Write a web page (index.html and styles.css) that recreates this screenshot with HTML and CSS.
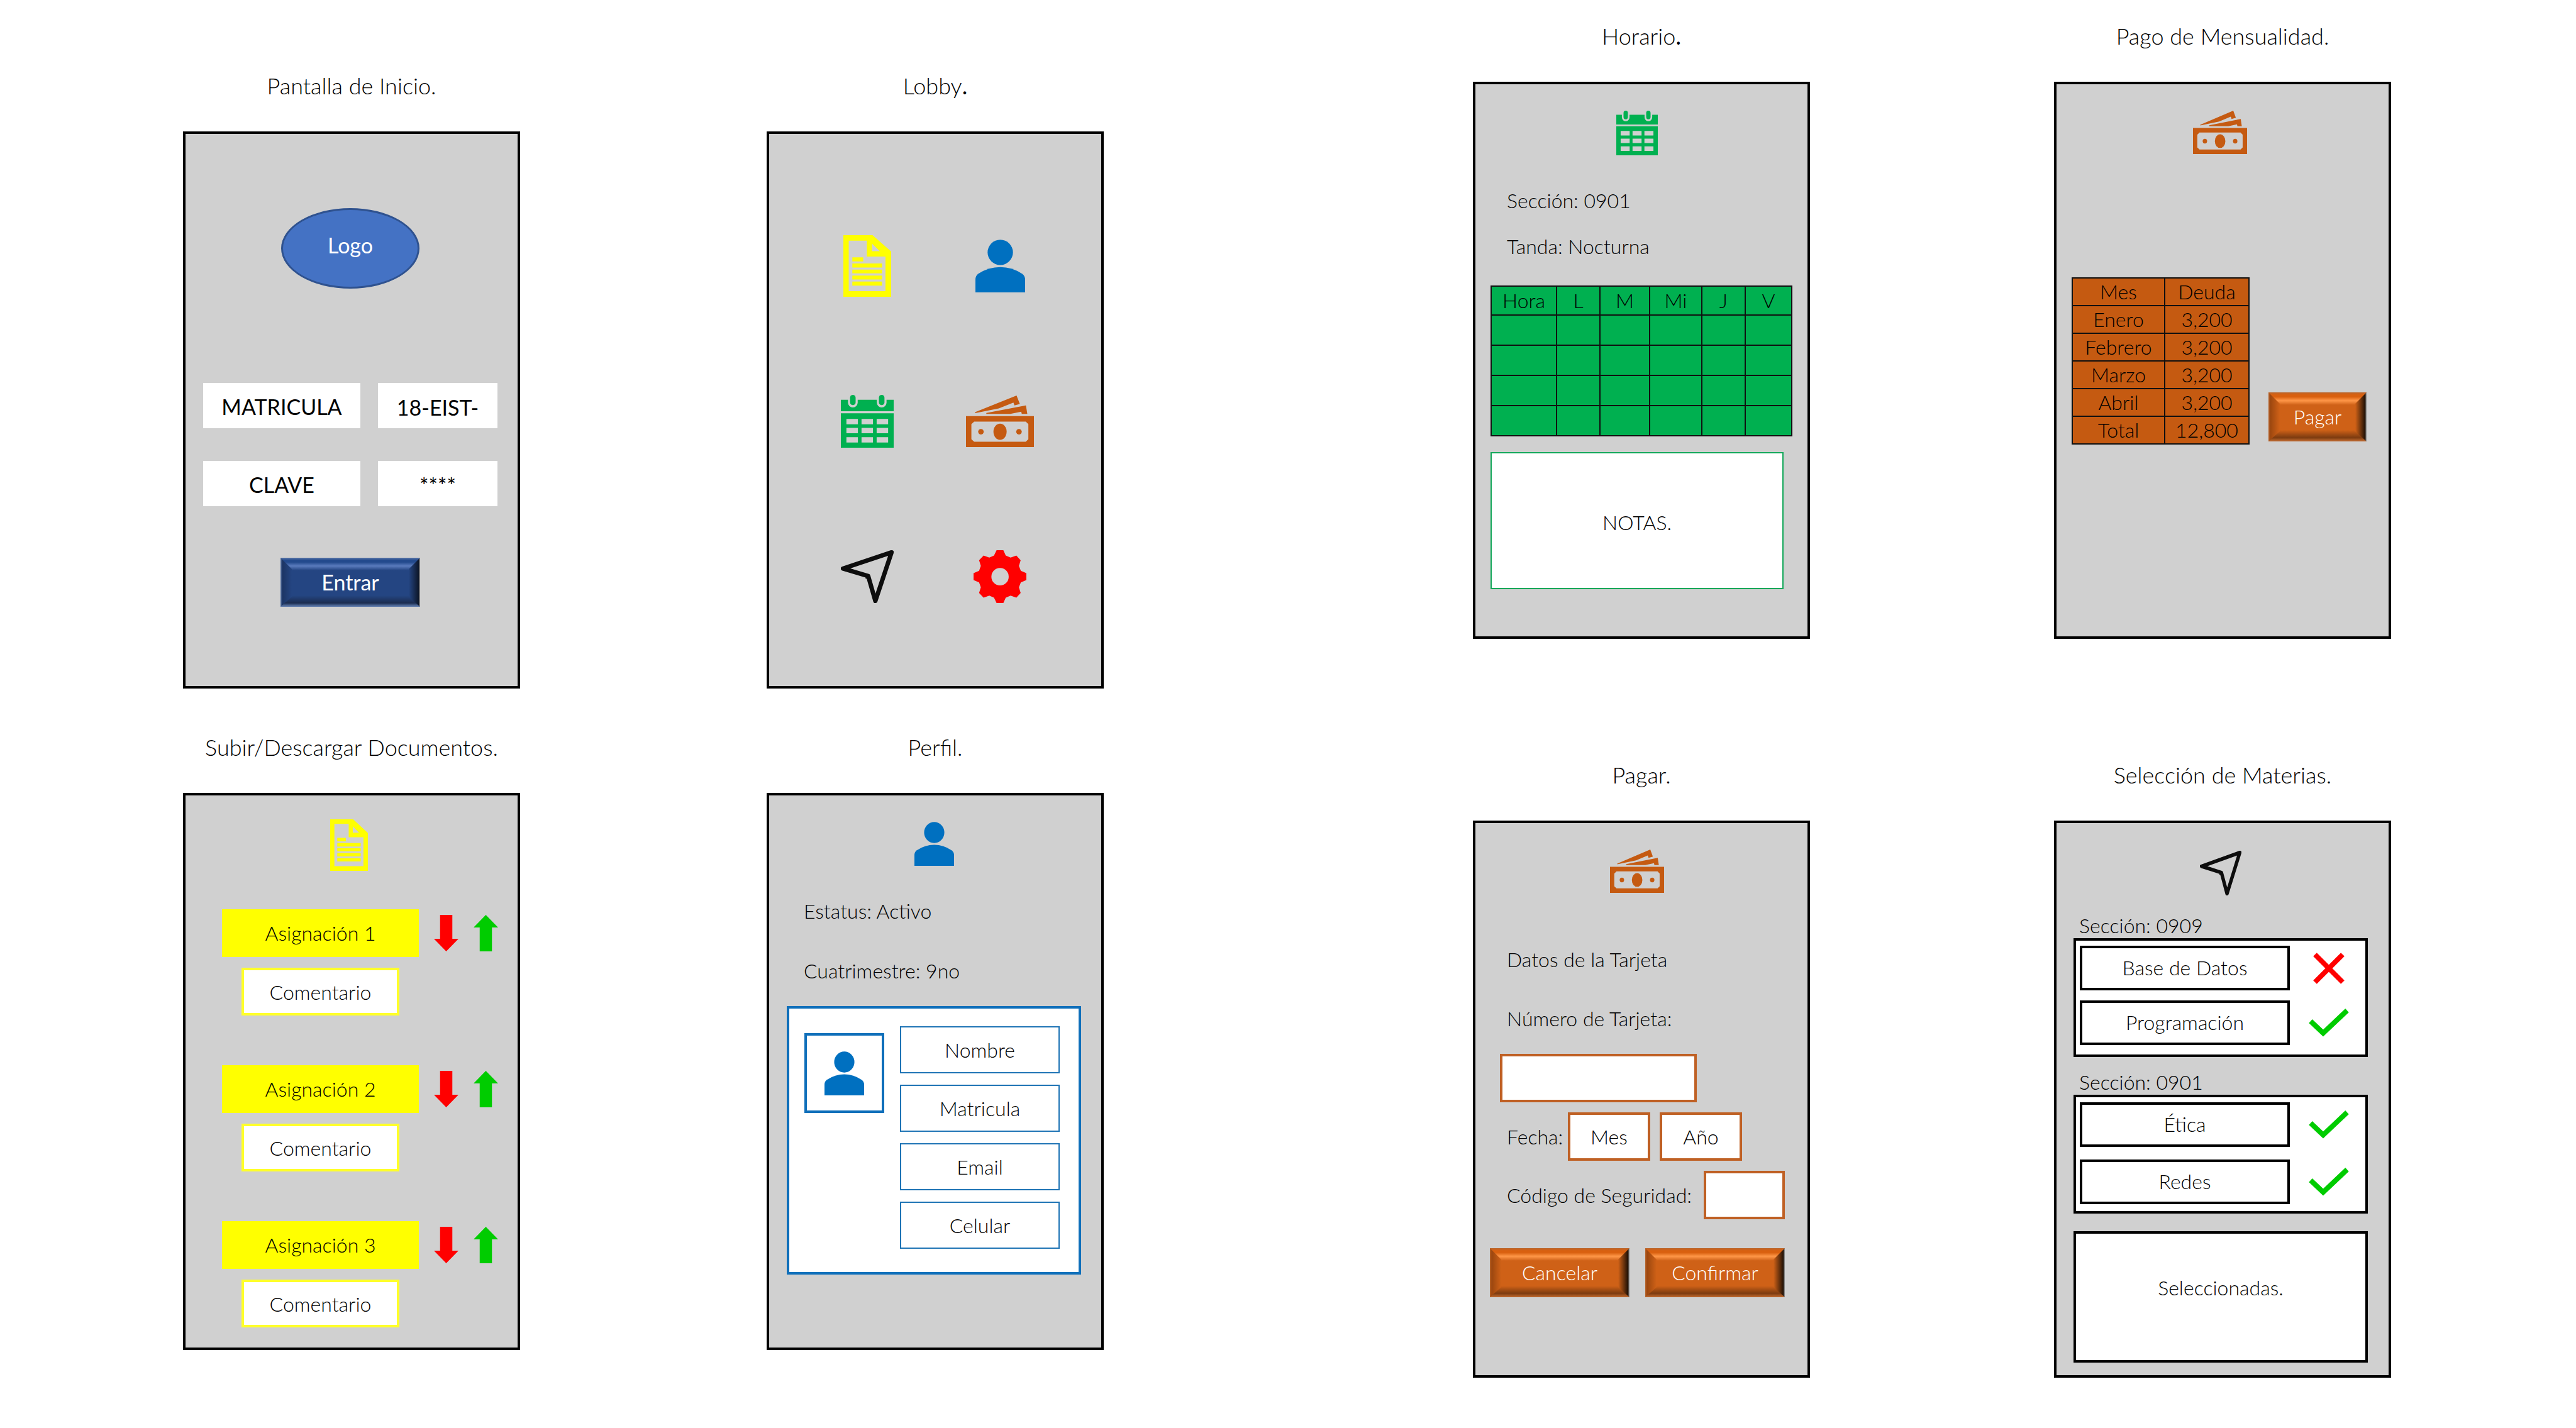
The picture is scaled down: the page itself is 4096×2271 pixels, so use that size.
FILE: index.html
```html
<!DOCTYPE html>
<html lang="es">
<head>
<meta charset="utf-8">
<title>Pantallas de la aplicación</title>
<link rel="stylesheet" href="styles.css">
</head>
<body>
<svg class="sprite" aria-hidden="true">
  <symbol id="doc" viewBox="71 67 277 357" preserveAspectRatio="none">
    <path fill="#ffff00" fill-rule="evenodd" d="M71 67H240L348 162V424H71ZM102 99V391H315V191H207V99ZM237 116V160H283Z"/>
    <path fill="#ffff00" d="M123 195H186V219H123ZM123 231H295V255H123ZM123 266H295V288H123ZM123 301H295V324H123ZM123 336H295V359H123Z"/>
  </symbol>
  <symbol id="person" viewBox="836 93 286 305" preserveAspectRatio="none">
    <circle fill="#0070c0" cx="979" cy="167" r="73"/>
    <path fill="#0070c0" d="M836 398V324Q836 302 853 290Q912 252 979 252Q1046 252 1104 290Q1122 302 1122 324V398Z"/>
  </symbol>
  <symbol id="calendar" viewBox="61 59 304 304" preserveAspectRatio="none">
    <path fill="#00b050" d="M61 87H102V103A28 28 0 0 0 158 103V87H268V103A28 28 0 0 0 324 103V87H365V153H61Z"/>
    <rect fill="#00b050" x="114" y="59" width="32" height="59" rx="16"/>
    <rect fill="#00b050" x="280" y="59" width="32" height="59" rx="16"/>
    <path fill="#00b050" fill-rule="evenodd" d="M61 165H365V363H61ZM93 197V228H159V197ZM180 197V228H246V197ZM267 197V228H333V197ZM93 249V280H159V249ZM180 249V280H246V249ZM267 249V280H333V249ZM93 302V333H159V302ZM180 302V333H246V302ZM267 302V333H333V302Z"/>
  </symbol>
  <symbol id="money" viewBox="785 58 391 299" preserveAspectRatio="none">
    <path fill="#c55a11" fill-rule="evenodd" d="M785 177H1176V357H785ZM832 209L816 224V311L832 326H1129L1144 311V224L1129 209Z"/>
    <ellipse fill="#c55a11" cx="981" cy="268" rx="38" ry="47"/>
    <circle fill="#c55a11" cx="871" cy="268" r="16"/>
    <circle fill="#c55a11" cx="1090" cy="268" r="16"/>
    <path fill="#c55a11" d="M837 155L1076 58L1095 107L1064 115L1058 99L974 133L838 160ZM902 159L1130 115L1138 165H1106L1103 152L1040 165H902Z"/>
  </symbol>
  <symbol id="plane" viewBox="63 65 303 302" preserveAspectRatio="none">
    <path fill="none" stroke="#0d0d0d" stroke-width="25" stroke-linejoin="round" d="M354 77L75 170L220 213L261 355Z"/>
    <path fill="#0d0d0d" d="M205 205H228V228H205Z"/>
  </symbol>
  <symbol id="gear" viewBox="826 63 305 303" preserveAspectRatio="none">
    <path fill="#ff0000" fill-rule="evenodd" d="M959 63H998L1012 94L1040 105L1073 94L1098 121L1088 153L1099 181L1131 195V234L1099 248L1088 276L1098 308L1073 335L1040 324L1012 335L998 366H959L944 335L917 324L884 335L858 308L868 276L858 248L826 234V195L858 181L868 153L858 121L884 94L917 105L944 94ZM979 165A50 50 0 1 0 979 265A50 50 0 1 0 979 165Z"/>
  </symbol>
  <symbol id="down" viewBox="0 0 40 58" preserveAspectRatio="none"><path fill="#ff0000" d="M10 0H30V38H40L20 58L0 38H10Z"/></symbol>
  <symbol id="up" viewBox="0 0 40 58" preserveAspectRatio="none"><path fill="#00cc00" d="M10 58H30V20H40L20 0L0 20H10Z"/></symbol>
  <symbol id="cross" viewBox="0 0 50 50"><path fill="none" stroke="#ff0000" stroke-width="8" d="M3 3L47 47M47 3L3 47"/></symbol>
  <symbol id="check" viewBox="0 0 64 46"><path fill="none" stroke="#00cc00" stroke-width="8" d="M3 20L23 39L61 3"/></symbol>
</svg>

<main class="board">
  <div class="half half--left">
    <section class="screen">
      <h2 class="screen__title">Pantalla de Inicio.</h2>
      <form class="panel login">
        <div class="logo">Logo</div>
        <div class="login__fields">
          <label class="login__cell" for="matricula">MATRICULA</label>
          <input class="login__cell" id="matricula" type="text" value="18-EIST-">
          <label class="login__cell" for="clave">CLAVE</label>
          <input class="login__cell" id="clave" type="text" value="****">
        </div>
        <button class="bevel bevel--blue login__enter" type="button">Entrar</button>
      </form>
    </section>

    <section class="screen">
      <h2 class="screen__title">Lobby<b>.</b></h2>
      <nav class="panel lobby">
        <a href="#documentos" aria-label="Documentos"><svg class="lobby__doc"><use href="#doc"/></svg></a>
        <a href="#perfil" aria-label="Perfil"><svg class="lobby__person"><use href="#person"/></svg></a>
        <a href="#horario" aria-label="Horario"><svg class="lobby__icon"><use href="#calendar"/></svg></a>
        <a href="#pago" aria-label="Pago"><svg class="lobby__money"><use href="#money"/></svg></a>
        <a href="#materias" aria-label="Materias"><svg class="lobby__icon"><use href="#plane"/></svg></a>
        <a href="#ajustes" aria-label="Ajustes"><svg class="lobby__icon"><use href="#gear"/></svg></a>
      </nav>
    </section>

    <section class="screen" id="documentos">
      <h2 class="screen__title">Subir/Descargar Documentos.</h2>
      <div class="panel docs">
        <div class="panel__icon"><svg class="icon icon--doc"><use href="#doc"/></svg></div>
        <div class="docs__list">
          <div class="task">
            <div class="task__name">Asignación 1</div>
            <button class="task__arrow" type="button" aria-label="Descargar"><svg><use href="#down"/></svg></button>
            <button class="task__arrow" type="button" aria-label="Subir"><svg><use href="#up"/></svg></button>
            <input class="task__comment" type="text" placeholder="Comentario" aria-label="Comentario 1">
          </div>
          <div class="task">
            <div class="task__name">Asignación 2</div>
            <button class="task__arrow" type="button" aria-label="Descargar"><svg><use href="#down"/></svg></button>
            <button class="task__arrow" type="button" aria-label="Subir"><svg><use href="#up"/></svg></button>
            <input class="task__comment" type="text" placeholder="Comentario" aria-label="Comentario 2">
          </div>
          <div class="task">
            <div class="task__name">Asignación 3</div>
            <button class="task__arrow" type="button" aria-label="Descargar"><svg><use href="#down"/></svg></button>
            <button class="task__arrow" type="button" aria-label="Subir"><svg><use href="#up"/></svg></button>
            <input class="task__comment" type="text" placeholder="Comentario" aria-label="Comentario 3">
          </div>
        </div>
      </div>
    </section>

    <section class="screen" id="perfil">
      <h2 class="screen__title">Perfil.</h2>
      <div class="panel profile">
        <div class="panel__icon"><svg class="icon icon--person"><use href="#person"/></svg></div>
        <p class="line profile__status">Estatus: Activo</p>
        <p class="line profile__term">Cuatrimestre: 9no</p>
        <div class="card">
          <div class="card__photo"><svg class="icon icon--person"><use href="#person"/></svg></div>
          <div class="card__fields">
            <input class="card__field" type="text" placeholder="Nombre" aria-label="Nombre">
            <input class="card__field" type="text" placeholder="Matricula" aria-label="Matricula">
            <input class="card__field" type="text" placeholder="Email" aria-label="Email">
            <input class="card__field" type="text" placeholder="Celular" aria-label="Celular">
          </div>
        </div>
      </div>
    </section>
  </div>

  <div class="half half--right">
    <section class="screen" id="horario">
      <h2 class="screen__title">Horario<b>.</b></h2>
      <div class="panel schedule">
        <div class="panel__icon"><svg class="icon icon--calendar"><use href="#calendar"/></svg></div>
        <p class="line schedule__section">Sección: 0901</p>
        <p class="line schedule__shift">Tanda: Nocturna</p>
        <table class="grid grid--green">
          <colgroup><col class="c-hour"><col class="c-l"><col class="c-m"><col class="c-mi"><col class="c-l"><col class="c-v"></colgroup>
          <thead><tr><th>Hora</th><th>L</th><th>M</th><th>Mi</th><th>J</th><th>V</th></tr></thead>
          <tbody>
            <tr><td></td><td></td><td></td><td></td><td></td><td></td></tr>
            <tr><td></td><td></td><td></td><td></td><td></td><td></td></tr>
            <tr><td></td><td></td><td></td><td></td><td></td><td></td></tr>
            <tr><td></td><td></td><td></td><td></td><td></td><td></td></tr>
          </tbody>
        </table>
        <textarea class="notes" placeholder="NOTAS." aria-label="Notas"></textarea>
      </div>
    </section>

    <section class="screen" id="pago">
      <h2 class="screen__title">Pago de Mensualidad.</h2>
      <div class="panel debt">
        <div class="panel__icon"><svg class="icon icon--money"><use href="#money"/></svg></div>
        <div class="debt__row">
          <table class="grid grid--orange">
            <colgroup><col class="c-month"><col class="c-debt"></colgroup>
            <thead><tr><th>Mes</th><th>Deuda</th></tr></thead>
            <tbody>
              <tr><td>Enero</td><td>3,200</td></tr>
              <tr><td>Febrero</td><td>3,200</td></tr>
              <tr><td>Marzo</td><td>3,200</td></tr>
              <tr><td>Abril</td><td>3,200</td></tr>
              <tr><td>Total</td><td>12,800</td></tr>
            </tbody>
          </table>
          <button class="bevel bevel--orange debt__pay" type="button">Pagar</button>
        </div>
      </div>
    </section>

    <section class="screen" id="pagar">
      <h2 class="screen__title">Pagar.</h2>
      <form class="panel pay">
        <div class="panel__icon"><svg class="icon icon--money"><use href="#money"/></svg></div>
        <p class="line pay__heading">Datos de la Tarjeta</p>
        <label class="line pay__number-label" for="tarjeta">Número de Tarjeta:</label>
        <input class="box pay__number" id="tarjeta" type="text">
        <div class="pay__row">
          <label class="line pay__date-label" for="mes">Fecha:</label>
          <select class="box pay__date" id="mes"><option>Mes</option></select>
          <select class="box pay__date" aria-label="Año"><option>Año</option></select>
        </div>
        <div class="pay__row pay__row--code">
          <label class="line" for="codigo">Código de Seguridad:</label>
          <input class="box pay__code" id="codigo" type="text">
        </div>
        <div class="pay__actions">
          <button class="bevel bevel--orange" type="button">Cancelar</button>
          <button class="bevel bevel--orange" type="button">Confirmar</button>
        </div>
      </form>
    </section>

    <section class="screen" id="materias">
      <h2 class="screen__title">Selección de Materias.</h2>
      <div class="panel subjects">
        <div class="panel__icon"><svg class="icon icon--plane"><use href="#plane"/></svg></div>
        <h3 class="line subjects__label">Sección: 0909</h3>
        <ul class="subjects__group">
          <li><span class="subject">Base de Datos</span><svg class="mark mark--cross"><use href="#cross"/></svg></li>
          <li><span class="subject">Programación</span><svg class="mark"><use href="#check"/></svg></li>
        </ul>
        <h3 class="line subjects__label">Sección: 0901</h3>
        <ul class="subjects__group subjects__group--loose">
          <li><span class="subject">Ética</span><svg class="mark"><use href="#check"/></svg></li>
          <li><span class="subject">Redes</span><svg class="mark"><use href="#check"/></svg></li>
        </ul>
        <div class="subjects__chosen">Seleccionadas.</div>
      </div>
    </section>
  </div>
</main>
</body>
</html>
```

FILE: styles.css
```css
* { box-sizing: border-box; }

body {
  margin: 0;
  background: #fff;
  color: #000;
  font-family: Lato, "Liberation Sans", sans-serif;
  font-size: 32px;
  font-weight: 300;
  line-height: 40px;
}

h2, h3, p, ul { margin: 0; padding: 0; font-weight: inherit; font-size: inherit; }
ul { list-style: none; }
b { font-weight: 400; }
svg { display: block; }
.sprite { display: none; }

input, select, textarea, button {
  margin: 0;
  padding: 0;
  border: 0;
  border-radius: 0;
  outline: 0;
  background: #fff;
  color: inherit;
  font: inherit;
  text-align: center;
}
::placeholder { color: #000; opacity: 1; }
select { appearance: none; text-align-last: center; }

/* Board */
.board { display: grid; grid-template-columns: 1fr 1fr; }
.half {
  display: grid;
  grid-template-columns: 1fr 1fr;
  align-content: start;
}
.half--left { padding: 116px 293px 0 291px; gap: 73px 392px; }
.half--right { padding: 37px 294px 0; gap: 196px 388px; }

.screen__title {
  margin-bottom: 53px;
  font-size: 36px;
  text-align: center;
}
.panel {
  display: flex;
  flex-direction: column;
  min-height: 886px;
  padding-top: 42px;
  border: 4px solid #000;
  background: #d0d0d0;
}
.panel__icon { display: flex; justify-content: center; padding-right: 8px; }
.icon--doc { width: 60px; height: 82px; }
.icon--person { width: 63px; height: 70px; }
.icon--calendar { width: 66px; height: 71px; }
.icon--money { width: 86px; height: 69px; }
.icon--plane { width: 66px; height: 71px; }
.line { display: block; padding-left: 50px; }

/* Bevelled buttons */
.bevel {
  position: relative;
  height: 78px;
  background: linear-gradient(var(--rim), var(--top) 4px, var(--top) 7px, var(--shine) 13px, var(--base) 20px, var(--base) 60px, var(--low) 72px, var(--rim) 77px);
  color: #fff;
}
.bevel::before, .bevel::after {
  content: "";
  position: absolute;
  top: 0;
  bottom: 0;
  width: 18px;
}
.bevel::before {
  left: 0;
  background: linear-gradient(90deg, var(--rim), var(--left) 3px, var(--base));
  clip-path: polygon(0 0, 100% 18px, 100% calc(100% - 16px), 0 100%);
}
.bevel::after {
  right: 0;
  background: linear-gradient(90deg, var(--base), var(--dark) 16px, #888 17px);
  clip-path: polygon(100% 0, 0 18px, 0 calc(100% - 16px), 100% 100%);
}
.bevel--blue { --rim: #5b77a8; --top: #234a8d; --shine: #5a7bbd; --base: #244582; --low: #1c2d50; --left: #1c3564; --dark: #0d1628; }
.bevel--orange { --rim: #b9652c; --top: #d9600f; --shine: #ff9748; --base: #cf6117; --low: #7c3b10; --left: #9c470f; --dark: #1e1006; }

/* Login */
.login { padding-top: 118px; padding-right: 4px; align-items: center; font-size: 34px; font-weight: 400; }
.logo {
  display: flex;
  align-items: center;
  justify-content: center;
  width: 220px;
  height: 128px;
  padding-bottom: 10px;
  border: 3px solid #2f528f;
  border-radius: 50%;
  background: #4472c4;
  color: #fff;
}
.login__fields {
  display: grid;
  grid-template-columns: 250fr 190fr;
  gap: 52px 28px;
  width: 100%;
  margin-top: 150px;
  padding: 0 28px;
}
.login__cell { width: 100%; height: 72px; padding-top: 4px; background: #fff; line-height: 68px; text-align: center; }
.login__enter { width: 222px; margin-top: 82px; }

/* Lobby */
.lobby {
  display: grid;
  grid-template-columns: 110px 110px;
  grid-auto-rows: 100px;
  align-content: start;
  gap: 147px 101px;
  padding: 160px 100px 0 101px;
}
.lobby a { display: flex; align-items: center; justify-content: center; }
.lobby__doc { width: 76px; height: 98px; }
.lobby__person { width: 79px; height: 84px; }
.lobby__icon { width: 84px; height: 84px; }
.lobby__money { width: 108px; height: 82px; }

/* Documents */
.docs { padding-top: 38px; }
.docs__list { display: grid; gap: 79px; margin-top: 61px; padding: 0 31px 0 58px; }
.task {
  display: grid;
  grid-template-columns: 1fr 39px 39px;
  align-items: center;
  gap: 17px 24px;
}
.task__name { height: 76px; background: #ffff00; line-height: 76px; text-align: center; }
.task__arrow { width: 39px; height: 58px; background: none; }
.task__arrow svg { width: 39px; height: 58px; }
.task__comment { justify-self: center; width: 251px; height: 76px; border: 4px solid #ffff29; }

/* Profile */
.profile .panel__icon { padding-right: 4px; }
.profile .line { padding-left: 55px; }
.profile__status { margin-top: 52px; }
.profile__term { margin-top: 55px; }
.card {
  display: flex;
  align-items: flex-start;
  gap: 25px;
  margin: 36px 32px 0 28px;
  padding: 28px 30px 37px 24px;
  border: 4px solid #0f6fba;
  background: #fff;
}
.card__photo {
  display: flex;
  align-items: center;
  justify-content: center;
  width: 127px;
  height: 127px;
  margin-top: 11px;
  border: 4px solid #0f6fba;
}
.card__fields { display: grid; flex: 1; gap: 18px; }
.card__field { width: 100%; height: 75px; border: 2px solid #1f74b5; }

/* Tables */
.grid { table-layout: fixed; border-collapse: collapse; }
.grid th, .grid td { padding: 0; border: 2px solid #101010; font-weight: inherit; text-align: center; }
.grid--green { width: 479px; margin: 42px 0 0 24px; background: #00b050; }
.grid--green tr { height: 48px; }
.grid--green thead tr { height: 46px; }
.c-hour { width: 104px; }
.c-l { width: 69px; }
.c-m { width: 79px; }
.c-mi { width: 83px; }
.c-v { width: 74px; }
.grid--orange { width: 281px; background: #c55a11; }
.grid--orange tr { height: 44px; }
.c-month { width: 147px; }
.c-debt { width: 134px; }

/* Schedule */
.schedule .panel__icon, .pay .panel__icon { padding-right: 14px; }
.schedule__section { margin-top: 52px; }
.schedule__shift { margin-top: 33px; }
.notes {
  height: 218px;
  margin: 25px 38px 0 24px;
  padding-top: 90px;
  border: 2px solid #13a85a;
  resize: none;
}

/* Debt */
.debt__row { display: flex; align-items: flex-end; gap: 30px; margin-top: 196px; padding: 0 35px 0 24px; }
.debt__pay { flex: 1; margin-bottom: 5px; }

/* Card payment */
.box { height: 77px; border: 4px solid #bf6024; }
.pay__heading { margin-top: 86px; }
.pay__number-label { margin-top: 54px; }
.pay__number { width: 313px; margin: 36px 0 0 39px; }
.pay__row { display: flex; align-items: center; margin-top: 16px; }
.pay__row--code { justify-content: space-between; padding-right: 36px; }
.pay__date-label { flex: 0 0 147px; }
.pay__date { width: 131px; margin-right: 15px; }
.pay__code { width: 129px; }
.pay__actions { display: grid; grid-template-columns: 1fr 1fr; gap: 25px; margin-top: 46px; padding: 0 36px 0 23px; }

/* Subjects */
.subjects { padding-top: 44px; }
.subjects .panel__icon { padding-right: 6px; margin-bottom: 8px; }
.subjects__label { margin-top: 20px; padding-left: 36px; }
.subjects__group {
  display: grid;
  align-content: start;
  gap: 16px;
  height: 189px;
  margin: 0 33px 0 27px;
  padding: 8px 26px 0 6px;
  border: 4px solid #000;
  background: #fff;
}
.subjects__group--loose { gap: 20px; }
.subjects__group li { display: flex; align-items: center; justify-content: space-between; }
.subject { width: 334px; height: 71px; border: 4px solid #000; line-height: 62px; text-align: center; }
.mark { width: 64px; height: 46px; }
.mark--cross { height: 50px; }
.subjects__chosen {
  display: flex;
  align-items: center;
  justify-content: center;
  height: 209px;
  margin: 28px 33px 0 27px;
  padding-bottom: 30px;
  border: 4px solid #000;
  background: #fff;
}
```
